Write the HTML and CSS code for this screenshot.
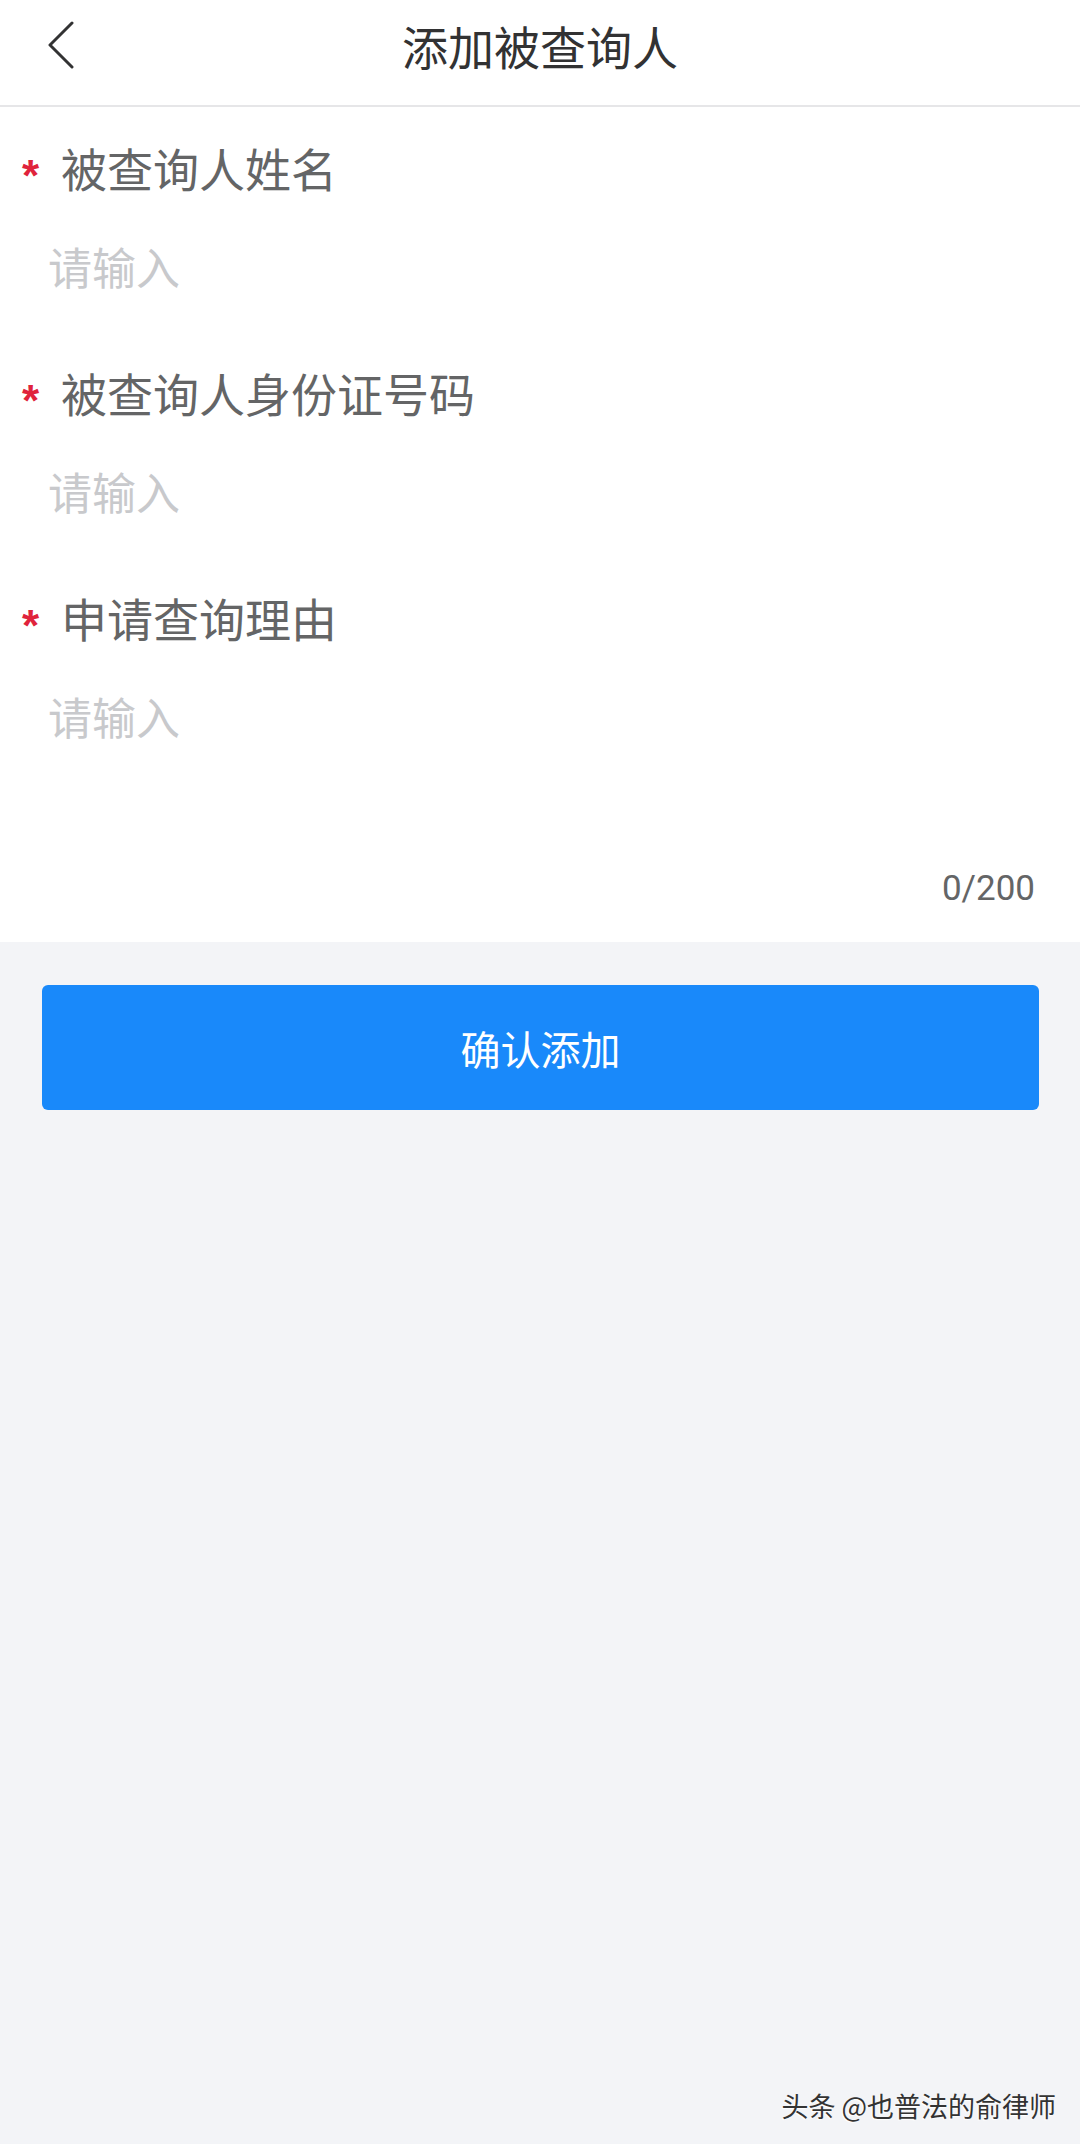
FILE: index.html
```html
<!DOCTYPE html>
<html lang="zh-CN">
<head>
    <meta charset="UTF-8">
    <meta name="viewport" content="width=device-width, initial-scale=1.0">
    <title>添加被查询人</title>
    <link rel="stylesheet" href="styles.css">
</head>
<body>
    <header class="nav-bar">
        <div class="nav-left">
            <svg class="back-icon" width="28" height="48" viewBox="0 0 28 48">
                <polyline points="24,2 2,24 24,46" fill="none" stroke="#323233" stroke-width="3" stroke-linecap="round" stroke-linejoin="round"/>
            </svg>
        </div>
        <h1 class="nav-title">添加被查询人</h1>
        <div class="nav-right"></div>
    </header>

    <!-- Form fields -->
    <section class="form">
        <div class="field">
            <div class="field-label"><span class="required">*</span>被查询人姓名</div>
            <div class="field-input">请输入</div>
        </div>
        <div class="field">
            <div class="field-label"><span class="required">*</span>被查询人身份证号码</div>
            <div class="field-input">请输入</div>
        </div>
        <div class="field">
            <div class="field-label"><span class="required">*</span>申请查询理由</div>
            <div class="field-input textarea">请输入</div>
            <div class="word-count">0/200</div>
        </div>
    </section>

    <div class="actions">
        <button class="submit-btn" type="button">确认添加</button>
    </div>

    <div class="watermark">头条 @也普法的俞律师</div>
</body>
</html>
```

FILE: styles.css
```css
/* General */
html, body {
    margin: 0;
    padding: 0;
}

body {
    min-height: 2144px;
    background-color: #f3f4f7;
    font-family: "Noto Sans CJK SC", "Noto Sans", sans-serif;
    color: #323233;
    position: relative;
}

/* Navigation bar */
.nav-bar {
    box-sizing: border-box;
    height: 107px;
    padding-bottom: 15px;
    display: grid;
    grid-template-columns: 1fr auto 1fr;
    align-items: center;
    background-color: #fff;
    border-bottom: 2px solid #e6e6e8;
}

.nav-left {
    padding-left: 48px;
    display: flex;
    align-items: center;
}

.back-icon {
    display: block;
}

.nav-title {
    margin: 0;
    font-size: 46px;
    font-weight: normal;
    line-height: 60px;
    color: #323233;
}

/* Form */
.form {
    background-color: #fff;
    padding: 30px 0 33px;
}

.field + .field {
    margin-top: 66px;
}

.field-label {
    display: flex;
    align-items: flex-start;
    padding-left: 22px;
    font-size: 46px;
    line-height: 60px;
    color: #646566;
}

.required {
    width: 39px;
    padding-top: 9px;
    font-family: "Liberation Sans", Arial, sans-serif;
    font-size: 44px;
    line-height: 60px;
    font-weight: bold;
    color: #e0233c;
}

.field-input {
    margin-top: 30px;
    padding-left: 48px;
    font-size: 44px;
    line-height: 60px;
    color: #c8c9cc;
}

.field-input.textarea {
    height: 183px;
}

.word-count {
    padding-right: 45px;
    text-align: right;
    font-family: Roboto, "Noto Sans", sans-serif;
    font-size: 35px;
    line-height: 40px;
    color: #646566;
}

/* Button */
.actions {
    padding: 43px 41px 0 42px;
}

.submit-btn {
    display: block;
    width: 100%;
    height: 125px;
    border: none;
    border-radius: 6px;
    background-color: #1989fa;
    color: #fff;
    font-family: "Noto Sans CJK SC", sans-serif;
    font-size: 40px;
    cursor: pointer;
}

/* Watermark laid over the screenshot */
.watermark {
    position: absolute;
    right: 24px;
    bottom: 22px;
    font-size: 27px;
    line-height: 32px;
    color: #333;
    text-shadow: -1px 1px 1px #fff;
}
```
